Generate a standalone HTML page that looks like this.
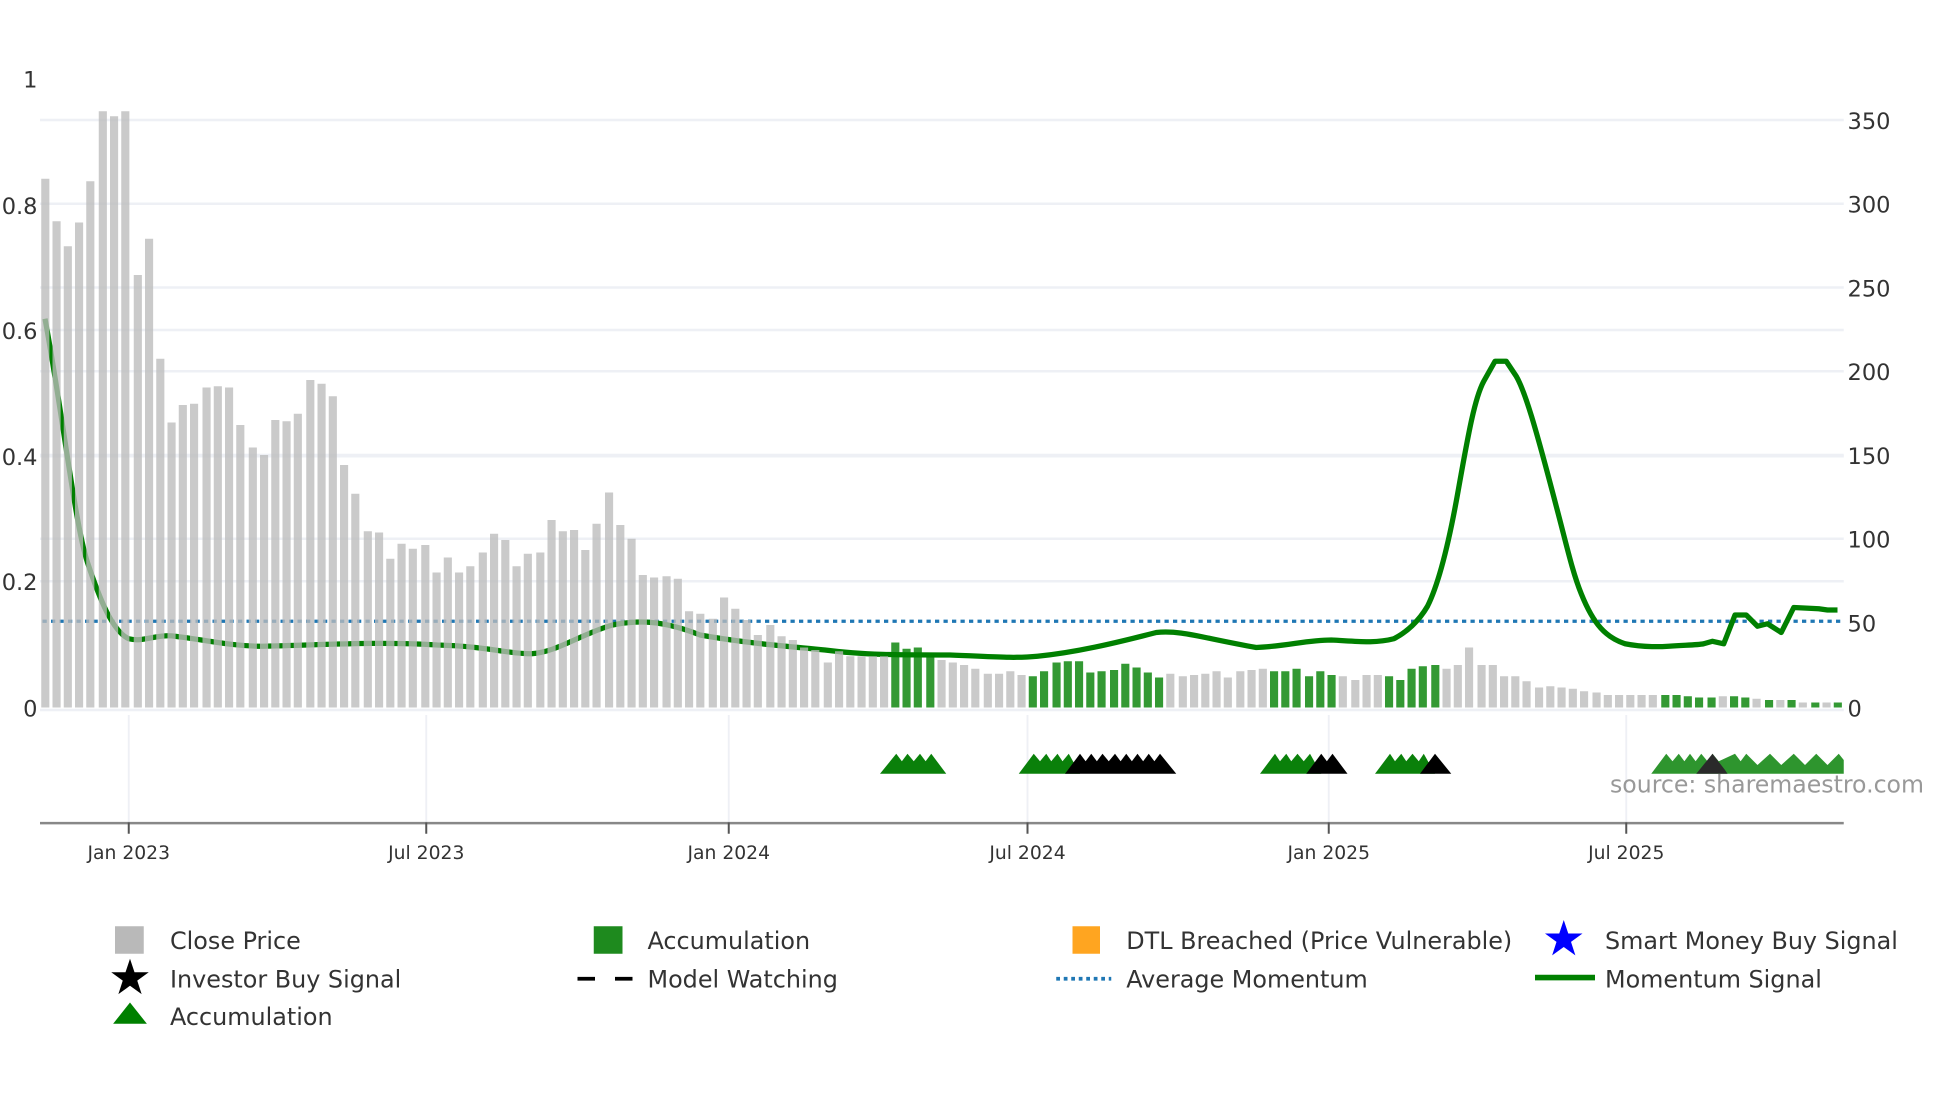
<!DOCTYPE html>
<html><head><meta charset="utf-8"><style>
html,body{margin:0;padding:0;background:#fff;}
svg{display:block;}
text{font-family:"DejaVu Sans","Liberation Sans",sans-serif;fill:#333;}
</style></head><body>
<svg width="1960" height="1102" viewBox="0 0 1568 881.6" preserveAspectRatio="none" xmlns="http://www.w3.org/2000/svg">
<rect width="1568" height="882" fill="#fff"/>
<g stroke="#eef0f5" stroke-width="2">
<line x1="32" y1="96" x2="1475" y2="96"/>
<line x1="32" y1="163" x2="1475" y2="163"/>
<line x1="32" y1="230" x2="1475" y2="230"/>
<line x1="32" y1="297" x2="1475" y2="297"/>
<line x1="32" y1="364" x2="1475" y2="364"/>
<line x1="32" y1="431" x2="1475" y2="431"/>
<line x1="32" y1="264" x2="1475" y2="264"/>
<line x1="32" y1="365" x2="1475" y2="365"/>
<line x1="32" y1="465" x2="1475" y2="465"/>
<line x1="32" y1="568" x2="1475" y2="568"/>
</g>
<g stroke="#eef0f5" stroke-width="1.5">
<line x1="103" y1="572" x2="103" y2="658"/><line x1="341" y1="572" x2="341" y2="658"/>
<line x1="583" y1="572" x2="583" y2="658"/><line x1="822" y1="572" x2="822" y2="658"/>
<line x1="1063" y1="572" x2="1063" y2="658"/><line x1="1301" y1="572" x2="1301" y2="658"/>
</g>
<line x1="34" y1="497" x2="1475" y2="497" stroke="#1f77b4" stroke-width="2.6" stroke-dasharray="3.4 3.4"/>
<path d="M36,255 C50,330 60,420 70,450 C80,480 90,505 103,511 C115,514 125,507 140,509 C165,512 185,517 210,517 C260,516 300,513 350,516 C390,517 405,523 425,523 C445,522 465,507 490,500 C510,496 530,496 560,508 C600,515 630,517 660,520 C690,524 720,524 760,524 C790,525 810,527 830,525 C860,522 890,515 925,506 C945,504 960,510 1005,518 C1030,517 1045,512 1065,512 C1085,513 1100,515 1115,511 C1125,506 1135,497 1142,485 C1152,465 1160,430 1167,390 C1175,345 1180,318 1187,305 L1196,289 L1205,289 L1213,301 C1220,313 1228,340 1245,405 C1253,435 1258,458 1265,475 C1275,500 1285,510 1300,515 C1310,517 1320,518 1335,517 C1350,516 1358,516 1363,515 L1370,513 L1379,515 L1388,492 L1397,492 L1406,501 L1414,499 L1425,506 L1435,486 L1455,487 L1462,488 L1470,488" fill="none" stroke="#008000" stroke-width="4.2" stroke-linejoin="round"/>
<g fill="#bbbbbb" fill-opacity="0.78">
<rect x="33" y="143" width="6.5" height="423"/><rect x="42" y="177" width="6.5" height="389"/><rect x="51" y="197" width="6.5" height="369"/><rect x="60" y="178" width="6.5" height="388"/><rect x="69" y="145" width="6.5" height="421"/><rect x="79" y="89" width="6.5" height="477"/><rect x="88" y="93" width="6.5" height="473"/><rect x="97" y="89" width="6.5" height="477"/><rect x="107" y="220" width="6.5" height="346"/><rect x="116" y="191" width="6.5" height="375"/><rect x="125" y="287" width="6.5" height="279"/><rect x="134" y="338" width="6.5" height="228"/><rect x="143" y="324" width="6.5" height="242"/><rect x="152" y="323" width="6.5" height="243"/><rect x="162" y="310" width="6.5" height="256"/><rect x="171" y="309" width="6.5" height="257"/><rect x="180" y="310" width="6.5" height="256"/><rect x="189" y="340" width="6.5" height="226"/><rect x="199" y="358" width="6.5" height="208"/><rect x="208" y="364" width="6.5" height="202"/><rect x="217" y="336" width="6.5" height="230"/><rect x="226" y="337" width="6.5" height="229"/><rect x="235" y="331" width="6.5" height="235"/><rect x="245" y="304" width="6.5" height="262"/><rect x="254" y="307" width="6.5" height="259"/><rect x="263" y="317" width="6.5" height="249"/><rect x="272" y="372" width="6.5" height="194"/><rect x="281" y="395" width="6.5" height="171"/><rect x="291" y="425" width="6.5" height="141"/><rect x="300" y="426" width="6.5" height="140"/><rect x="309" y="447" width="6.5" height="119"/><rect x="318" y="435" width="6.5" height="131"/><rect x="327" y="439" width="6.5" height="127"/><rect x="337" y="436" width="6.5" height="130"/><rect x="346" y="458" width="6.5" height="108"/><rect x="355" y="446" width="6.5" height="120"/><rect x="364" y="458" width="6.5" height="108"/><rect x="373" y="453" width="6.5" height="113"/><rect x="383" y="442" width="6.5" height="124"/><rect x="392" y="427" width="6.5" height="139"/><rect x="401" y="432" width="6.5" height="134"/><rect x="410" y="453" width="6.5" height="113"/><rect x="419" y="443" width="6.5" height="123"/><rect x="429" y="442" width="6.5" height="124"/><rect x="438" y="416" width="6.5" height="150"/><rect x="447" y="425" width="6.5" height="141"/><rect x="456" y="424" width="6.5" height="142"/><rect x="465" y="440" width="6.5" height="126"/><rect x="474" y="419" width="6.5" height="147"/><rect x="484" y="394" width="6.5" height="172"/><rect x="493" y="420" width="6.5" height="146"/><rect x="502" y="431" width="6.5" height="135"/><rect x="511" y="460" width="6.5" height="106"/><rect x="520" y="462" width="6.5" height="104"/><rect x="530" y="461" width="6.5" height="105"/><rect x="539" y="463" width="6.5" height="103"/><rect x="548" y="489" width="6.5" height="77"/><rect x="557" y="491" width="6.5" height="75"/><rect x="567" y="495" width="6.5" height="71"/><rect x="576" y="478" width="6.5" height="88"/><rect x="585" y="487" width="6.5" height="79"/><rect x="594" y="496" width="6.5" height="70"/><rect x="603" y="508" width="6.5" height="58"/><rect x="613" y="500" width="6.5" height="66"/><rect x="622" y="509" width="6.5" height="57"/><rect x="631" y="512" width="6.5" height="54"/><rect x="640" y="518" width="6.5" height="48"/><rect x="649" y="520" width="6.5" height="46"/><rect x="659" y="530" width="6.5" height="36"/><rect x="668" y="521" width="6.5" height="45"/><rect x="677" y="525" width="6.5" height="41"/><rect x="686" y="525" width="6.5" height="41"/><rect x="695" y="525" width="6.5" height="41"/><rect x="704" y="525" width="6.5" height="41"/>
<rect x="750" y="528" width="6.5" height="38"/><rect x="759" y="530" width="6.5" height="36"/><rect x="768" y="532" width="6.5" height="34"/><rect x="777" y="535" width="6.5" height="31"/><rect x="787" y="539" width="6.5" height="27"/><rect x="796" y="539" width="6.5" height="27"/><rect x="805" y="537" width="6.5" height="29"/><rect x="814" y="540" width="6.5" height="26"/>
<rect x="933" y="539" width="6.5" height="27"/><rect x="943" y="541" width="6.5" height="25"/><rect x="952" y="540" width="6.5" height="26"/><rect x="961" y="539" width="6.5" height="27"/><rect x="970" y="537" width="6.5" height="29"/><rect x="979" y="542" width="6.5" height="24"/><rect x="989" y="537" width="6.5" height="29"/><rect x="998" y="536" width="6.5" height="30"/><rect x="1007" y="535" width="6.5" height="31"/>
<rect x="1071" y="541" width="6.5" height="25"/><rect x="1081" y="544" width="6.5" height="22"/><rect x="1090" y="540" width="6.5" height="26"/><rect x="1099" y="540" width="6.5" height="26"/>
<rect x="1154" y="535" width="6.5" height="31"/><rect x="1163" y="532" width="6.5" height="34"/><rect x="1172" y="518" width="6.5" height="48"/><rect x="1182" y="532" width="6.5" height="34"/><rect x="1191" y="532" width="6.5" height="34"/><rect x="1200" y="541" width="6.5" height="25"/><rect x="1209" y="541" width="6.5" height="25"/><rect x="1218" y="545" width="6.5" height="21"/><rect x="1228" y="550" width="6.5" height="16"/><rect x="1237" y="549" width="6.5" height="17"/><rect x="1246" y="550" width="6.5" height="16"/><rect x="1255" y="551" width="6.5" height="15"/><rect x="1264" y="553" width="6.5" height="13"/><rect x="1274" y="554" width="6.5" height="12"/><rect x="1283" y="556" width="6.5" height="10"/><rect x="1292" y="556" width="6.5" height="10"/><rect x="1301" y="556" width="6.5" height="10"/><rect x="1310" y="556" width="6.5" height="10"/><rect x="1319" y="556" width="6.5" height="10"/>
<rect x="1375" y="557" width="6.5" height="9"/><rect x="1402" y="559" width="6.5" height="7"/><rect x="1421" y="560" width="6.5" height="6"/><rect x="1439" y="562" width="6.5" height="4"/><rect x="1458" y="562" width="6.5" height="4"/>
</g>
<g fill="#008000" fill-opacity="0.8">
<rect x="713" y="514" width="6.5" height="52"/><rect x="722" y="519" width="6.5" height="47"/><rect x="731" y="518" width="6.5" height="48"/><rect x="741" y="522" width="6.5" height="44"/>
<rect x="823" y="541" width="6.5" height="25"/><rect x="832" y="537" width="6.5" height="29"/><rect x="842" y="530" width="6.5" height="36"/><rect x="851" y="529" width="6.5" height="37"/><rect x="860" y="529" width="6.5" height="37"/><rect x="869" y="538" width="6.5" height="28"/><rect x="878" y="537" width="6.5" height="29"/><rect x="888" y="536" width="6.5" height="30"/><rect x="897" y="531" width="6.5" height="35"/><rect x="906" y="534" width="6.5" height="32"/><rect x="915" y="538" width="6.5" height="28"/><rect x="924" y="542" width="6.5" height="24"/>
<rect x="1016" y="537" width="6.5" height="29"/><rect x="1025" y="537" width="6.5" height="29"/><rect x="1034" y="535" width="6.5" height="31"/><rect x="1044" y="541" width="6.5" height="25"/><rect x="1053" y="537" width="6.5" height="29"/><rect x="1062" y="540" width="6.5" height="26"/>
<rect x="1108" y="541" width="6.5" height="25"/><rect x="1117" y="544" width="6.5" height="22"/><rect x="1126" y="535" width="6.5" height="31"/><rect x="1135" y="533" width="6.5" height="33"/><rect x="1145" y="532" width="6.5" height="34"/>
<rect x="1329" y="556" width="6.5" height="10"/><rect x="1338" y="556" width="6.5" height="10"/><rect x="1347" y="557" width="6.5" height="9"/><rect x="1356" y="558" width="6.5" height="8"/><rect x="1366" y="558" width="6.5" height="8"/><rect x="1384" y="557" width="6.5" height="9"/><rect x="1393" y="558" width="6.5" height="8"/><rect x="1412" y="560" width="6.5" height="6"/><rect x="1430" y="560" width="6.5" height="6"/><rect x="1449" y="562" width="6.5" height="4"/><rect x="1467" y="562" width="6.5" height="4"/>
</g>
<g fill="#0a800a">
<path d="M704,619 L717,603 L721.5,609 L726,603 L731,609 L736,603 L740.5,609 L745,603 L757,619Z"/>
<path d="M815,619 L827,603 L832,609 L837,603 L841,609 L846,603 L850,609 L855,603 L864,619Z"/>
<path d="M1008,619 L1020,603 L1024,609 L1029,603 L1033,609 L1038,603 L1043,609 L1048,603 L1057,619Z"/>
<path d="M1100,619 L1112,603 L1116,609 L1121,603 L1125,609 L1130,603 L1135,609 L1139,603 L1148,619Z"/>
</g>
<g fill="#000">
<path d="M852,619 L864,603 L868.5,609 L873,603 L877.5,609 L882,603 L887,609 L892,603 L896.5,609 L901,603 L905.5,609 L910,603 L914.5,609 L919,603 L923.5,609 L928,603 L941,619Z"/>
<path d="M1045,619 L1057,603 L1061.5,609 L1066,603 L1078,619Z"/>
<path d="M1136,619 L1148,603 L1161,619Z"/>
</g>
<g fill="#2e952e">
<path d="M1321,619 L1333,603 L1338,609 L1343,603 L1347.5,609 L1352,603 L1356.5,609 L1361,603 L1366,609 L1370,603 L1375,609 L1388,603 L1392.5,609 L1397,603 L1406,612 L1416,603 L1425,612 L1435,603 L1444,612 L1453,603 L1462,612 L1471,603 L1475,608 L1475,619Z"/>
</g>
<path d="M1357,619 L1370,603 L1380,616 L1382,619Z" fill="#2a2a2a"/>
<text x="1288" y="634" font-size="18.9" style="fill:#999">source: sharemaestro.com</text>
<line x1="32" y1="658.5" x2="1475" y2="658.5" stroke="#888" stroke-width="2"/>
<g stroke="#555" stroke-width="1.6">
<line x1="103" y1="658" x2="103" y2="667"/><line x1="341" y1="658" x2="341" y2="667"/><line x1="583" y1="658" x2="583" y2="667"/><line x1="822" y1="658" x2="822" y2="667"/><line x1="1063" y1="658" x2="1063" y2="667"/><line x1="1301" y1="658" x2="1301" y2="667"/>
</g>
<g font-size="15" text-anchor="middle">
<text x="103" y="687">Jan 2023</text><text x="341" y="687">Jul 2023</text><text x="583" y="687">Jan 2024</text><text x="822" y="687">Jul 2024</text><text x="1063" y="687">Jan 2025</text><text x="1301" y="687">Jul 2025</text>
</g>
<g font-size="18" text-anchor="end">
<text x="30" y="70">1</text><text x="30" y="171">0.8</text><text x="30" y="271">0.6</text><text x="30" y="372">0.4</text><text x="30" y="472">0.2</text><text x="30" y="573">0</text>
</g>
<g font-size="18">
<text x="1478" y="103">350</text><text x="1478" y="170">300</text><text x="1478" y="237">250</text><text x="1478" y="304">200</text><text x="1478" y="371">150</text><text x="1478" y="438">100</text><text x="1478" y="505">50</text><text x="1478" y="573">0</text>
</g>
<g font-size="19.1">
<rect x="92" y="741" width="23" height="22" fill="#b9b9b9"/>
<text x="136" y="759">Close Price</text>
<path d="M104,767 L107.6,777.8 L119,777.8 L109.8,784.5 L113.3,795.3 L104,788.6 L94.7,795.3 L98.2,784.5 L89,777.8 L100.4,777.8Z" fill="#000"/>
<text x="136" y="790">Investor Buy Signal</text>
<path d="M104,802 L117.5,819 L90.5,819Z" fill="#008000"/>
<text x="136" y="820">Accumulation</text>
<rect x="475" y="741" width="23" height="22" fill="#1e8a1e"/>
<text x="518" y="759">Accumulation</text>
<line x1="462" y1="783" x2="506" y2="783" stroke="#000" stroke-width="3" stroke-dasharray="14 16"/>
<text x="518" y="790">Model Watching</text>
<rect x="858" y="741" width="22" height="22" fill="#ffa520"/>
<text x="901" y="759">DTL Breached (Price Vulnerable)</text>
<line x1="845" y1="783" x2="889" y2="783" stroke="#1f77b4" stroke-width="3" stroke-dasharray="3 3"/>
<text x="901" y="790">Average Momentum</text>
<path d="M1251,736 L1254.6,746.8 L1266,746.8 L1256.8,753.5 L1260.3,764.3 L1251,757.6 L1241.7,764.3 L1245.2,753.5 L1236,746.8 L1247.4,746.8Z" fill="#0000ff"/>
<text x="1284" y="759">Smart Money Buy Signal</text>
<line x1="1228" y1="782" x2="1276" y2="782" stroke="#008000" stroke-width="4.5"/>
<text x="1284" y="790">Momentum Signal</text>
</g>
</svg>
</body></html>
